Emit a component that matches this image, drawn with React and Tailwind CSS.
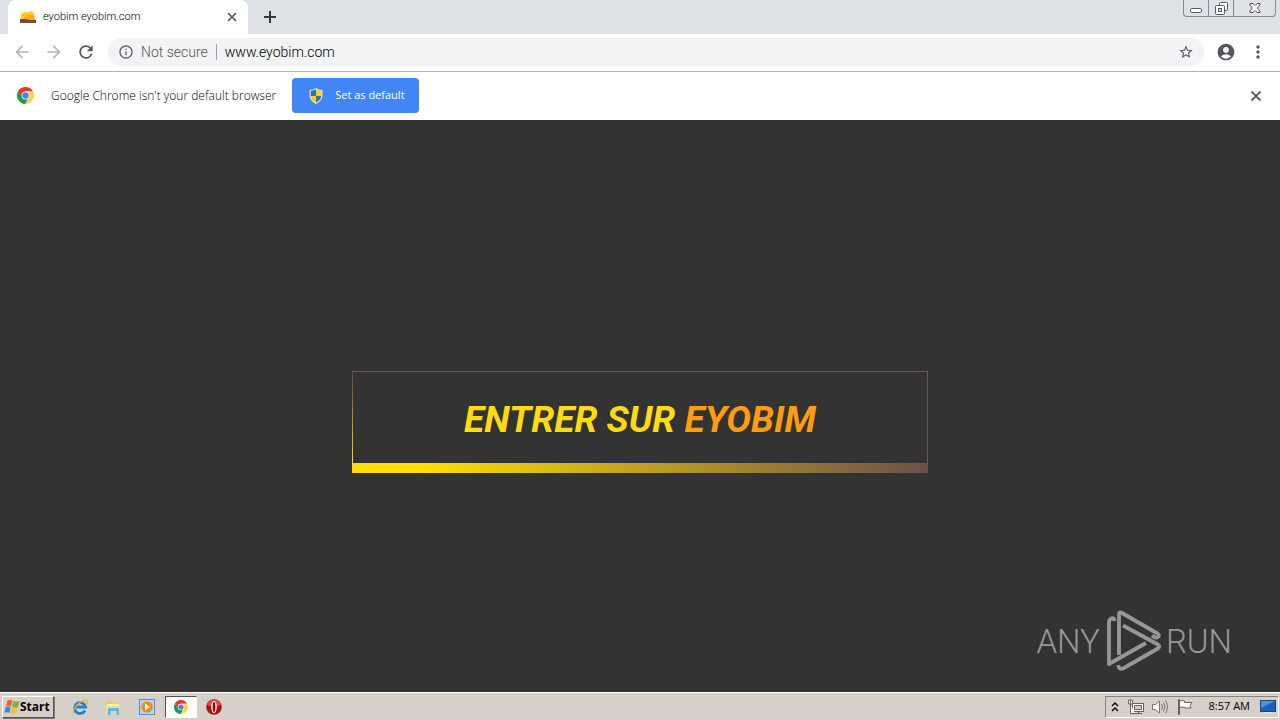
import { useState } from 'react'
import { MdArrowBack, MdArrowForward, MdRefresh, MdInfoOutline, MdStarBorder, MdAccountCircle, MdMoreVert } from 'react-icons/md'

function ChromeLogo({ className }) {
  return (
    <svg viewBox="0 0 48 48" className={className} aria-hidden="true">
      <path d="M24 13h21.2A24 24 0 0 0 3.2 12l10.6 18z" fill="#dd3b30" />
      <path d="M33.6 29.500 23 48A24 24 0 0 1 3.200 12l11.200 17.500z" fill="#169c50" />
      <path d="M24 13h21.200A24 24 0 0 1 23 48l10.600-18.500z" fill="#fdd250" />
      <circle cx="24" cy="24" r="11" fill="#fff" />
      <circle cx="24" cy="24" r="9" fill="#4a80e8" />
    </svg>
  )
}

function CloseIcon({ className }) {
  return (
    <svg viewBox="0 0 16 16" className={className} fill="none" stroke="currentColor" strokeWidth="2" aria-hidden="true">
      <path d="m3.500 3.500 9 9M12.500 3.500l-9 9" />
    </svg>
  )
}

function Favicon() {
  return (
    <svg viewBox="0 0 16 16" className="size-4 shrink-0" aria-hidden="true">
      <path d="M1 4.500 5 3l3 .5L11 2l3 1.500.5 7.500H1z" fill="#ffcf1c" />
      <path d="M6 6h8l1 5H3z" fill="#f7ae12" />
      <path d="M0 10h6l4 1h6v3H0z" fill="#6b5043" />
    </svg>
  )
}

function Shield() {
  return (
    <svg viewBox="0 0 16 16" className="size-4 shrink-0" aria-hidden="true">
      <path d="M8 0q3 2 6.500 2v5c0 4-2.500 7-6.500 9-4-2-6.500-5-6.500-9V2Q5 2 8 0z" fill="#e6dfb6" />
      <path d="M8 1.500V8H2.800V3z" fill="#2e6fc4" />
      <path d="M8 1.500V8h5.200V3z" fill="#fcd116" />
      <path d="M2.800 8H8v6.500C5 13 3 11 2.800 8z" fill="#fcd116" />
      <path d="M13.200 8H8v6.500c3-1.500 5-3.500 5.200-6.500z" fill="#2e6fc4" />
    </svg>
  )
}

function WindowControls() {
  const btn = 'flex h-full items-center justify-center border-r border-[#858a92]'
  return (
    <div className="mr-1 flex h-[17px] self-start overflow-hidden rounded-b border border-t-0 border-[#858a92]">
      <button className={`${btn} w-[25px]`} aria-label="Minimize">
        <svg viewBox="0 0 12 12" className="size-3">
          <rect x="0.500" y="6.500" width="11" height="4" rx="1" fill="#fff" stroke="#555a66" />
        </svg>
      </button>
      <button className={`${btn} w-[25px]`} aria-label="Restore">
        <svg viewBox="0 0 13 13" className="size-[13px]">
          <rect x="4.500" y="0.500" width="8" height="8" rx="1" fill="#fff" stroke="#555a66" />
          <rect x="0.500" y="3.500" width="9" height="9" rx="1" fill="#fff" stroke="#555a66" />
          <rect x="3.500" y="6.500" width="3" height="3" fill="#dee1e6" stroke="#555a66" />
        </svg>
      </button>
      <button className="flex h-full w-[41px] items-center justify-center" aria-label="Close window">
        <svg viewBox="0 0 12 12" className="size-3">
          <path d="M1 1.500h3l2 2 2-2h3v1.500L8.500 6 11 9v1.500H8l-2-2-2 2H1V9l2.500-3L1 3z" fill="#fff" stroke="#555a66" />
        </svg>
      </button>
    </div>
  )
}

function TabStrip() {
  return (
    <div className="flex h-[34px] bg-[#dee1e6] pl-2">
      <div className="flex w-60 items-center rounded-t-lg bg-white pl-3 pr-2">
        <Favicon />
        <span className="ml-[7px] flex-1 text-[11px] font-light text-black">eyobim eyobim.com</span>
        <button aria-label="Close tab" className="flex size-4 items-center justify-center text-[#5f6368]">
          <CloseIcon className="size-[14px]" />
        </button>
      </div>
      <button aria-label="New tab" className="ml-[14px] text-[#33363b]">
        <svg viewBox="0 0 16 16" className="size-4" fill="none" stroke="currentColor" strokeWidth="2" aria-hidden="true">
          <path d="M8 2v12M2 8h12" />
        </svg>
      </button>
      <div className="flex-1" />
      <WindowControls />
    </div>
  )
}

function Toolbar() {
  const [url, setUrl] = useState('www.eyobim.com')
  return (
    <div className="flex h-[38px] items-center border-b border-[#b2b5b8] bg-white pb-px pl-3">
      <button aria-label="Back" className="mr-3 text-[#b5b7ba]"><MdArrowBack className="size-5" /></button>
      <button aria-label="Forward" className="mr-3 text-[#b5b7ba]"><MdArrowForward className="size-5" /></button>
      <button aria-label="Reload" className="mr-3 text-[#54575b]"><MdRefresh className="size-5" /></button>
      <div className="flex h-7 flex-1 items-center rounded-full bg-[#f1f3f4] pl-[10px] pr-[10px]">
        <MdInfoOutline className="size-4 text-[#5f6368]" />
        <span className="ml-[7px] text-[14px] font-light text-[#54575b]">Not secure</span>
        <span className="ml-2 h-4 w-px bg-[#9aa0a6]" />
        <input
          aria-label="Address"
          value={url}
          onChange={(e) => setUrl(e.target.value)}
          className="ml-2 min-w-0 flex-1 bg-transparent text-[14px] font-light text-black outline-none"
        />
        <button aria-label="Bookmark this page" className="text-[#54575b]">
          <MdStarBorder className="size-4" />
        </button>
      </div>
      <button aria-label="Profile" className="ml-3 text-[#54575b]"><MdAccountCircle className="size-5" /></button>
      <button aria-label="Menu" className="ml-3 mr-3 text-[#54575b]"><MdMoreVert className="size-5" /></button>
    </div>
  )
}

function InfoBar({ onClose }) {
  return (
    <div className="flex h-12 items-center bg-white pb-px pl-[17px] pr-4 font-['Open_Sans',sans-serif]">
      <ChromeLogo className="size-[17px]" />
      <span className="ml-[17px] text-[12px] font-light text-black">Google Chrome isn't your default browser</span>
      <button className="ml-4 flex h-[35px] w-[127px] items-center rounded bg-[#4285f4] pl-4 text-[11px] text-white">
        <Shield />
        <span className="ml-[11px]">Set as default</span>
      </button>
      <button onClick={onClose} aria-label="Dismiss" className="ml-auto text-[#5f6368]">
        <CloseIcon className="size-4" />
      </button>
    </div>
  )
}

function AnyRunMark() {
  return (
    <div className="absolute bottom-5 right-12 flex items-center gap-1 text-[33px] leading-none text-[#979797]">
      <span className="font-light">ANY</span>
      <svg viewBox="0 0 56 62" className="ml-[2px] h-[62px] w-14" fill="none" stroke="currentColor" strokeWidth="3.800" strokeLinejoin="round" aria-hidden="true">
        <path d="M8.500 11Q8 7 5 8.500 3 10 3 13V54L40 33" />
        <path d="M13 45V4Q13 1.500 16 3L51.500 23.500Q54.500 26 51 27.500 49 28 46 25.500" />
        <path d="M17 15.500 51 34Q55.500 36.500 51 39L17 58.500Q12.500 60 12.500 55" />
      </svg>
      <span className="font-light">RUN</span>
    </div>
  )
}

function Page() {
  return (
    <main className="relative flex flex-1 items-center justify-center bg-[#333333]">
      <a
        href="#eyobim"
        className="mt-8 flex h-[102px] w-[45%] items-center justify-center pb-1 text-[37px] font-bold italic text-[#ffdb15] [background:linear-gradient(90deg,#ffde05_12%,#6d5149)_bottom/100%_10px_no-repeat,linear-gradient(0deg,#ffde05_10%,#6d5149_90%)_left/1px_100%_no-repeat,linear-gradient(#6d5752,#6d5752)_top/100%_1px_no-repeat,linear-gradient(#6d5752,#6d5752)_right/1px_100%_no-repeat]"
      >
        <span>ENTRER SUR <span className="text-[#ff9c12]">EYOBIM</span></span>
      </a>
      <AnyRunMark />
    </main>
  )
}

function WindowsFlag() {
  return (
    <svg viewBox="0 0 16 16" className="size-4" aria-hidden="true">
      <path d="M3.500 1.500q2.500-1.500 5 0L7 7.500q-2.500-1.500-5 0z" fill="#e8632b" />
      <path d="M9.200 2q3 1.500 6.300 0L14 8q-3 1.500-6 0z" fill="#7fb241" />
      <path d="M1.700 8.300q2.500-1.500 5 0L5.300 14q-2.500-1.500-5 0z" fill="#3f83cf" />
      <path d="M7.600 8.800q3 1.500 6 0L12 14.500q-3 1.500-6 0z" fill="#f8c02c" />
    </svg>
  )
}

function ExplorerIcon() {
  return (
    <svg viewBox="0 0 16 16" className="size-4" fill="none" aria-hidden="true">
      <path d="M13 11.500A5.500 5.500 0 1 1 13.500 8H4" stroke="#2383d2" strokeWidth="2.800" />
      <path d="M2 14.500C-1 11 10-1 15 1.500q1 1-1 3.500" stroke="#e8b62c" strokeWidth="1.300" />
    </svg>
  )
}

function FolderIcon() {
  return (
    <svg viewBox="0 0 16 16" className="size-4" aria-hidden="true">
      <path d="M1 2h5l1 1.500h7V13H1z" fill="#eecb62" />
      <path d="M2 5h12v3H2z" fill="#fff4b8" />
      <path d="M1 7h14v6H1z" fill="#f5dc82" />
      <path d="M3 16v-6q0-1 1-1h9q1 0 1 1v6h-2.500v-4h-6v4z" fill="#62b5dc" />
    </svg>
  )
}

function PlayerIcon() {
  return (
    <svg viewBox="0 0 16 16" className="size-4" aria-hidden="true">
      <rect x="0.500" y="0.500" width="15" height="15" fill="#b5d5f0" stroke="#568fc7" />
      <circle cx="8" cy="8" r="5.800" fill="#f28a1c" />
      <path d="m6 4.500 5 3.500-5 3.500z" fill="#fff" />
    </svg>
  )
}

function OperaIcon() {
  return (
    <svg viewBox="0 0 16 16" className="size-4" aria-hidden="true">
      <circle cx="8" cy="8" r="7.800" fill="#a81219" />
      <path d="M1 6a7.300 7.300 0 0 1 14 0q-7 3-14 0z" fill="#d9484a" />
      <ellipse cx="8" cy="8" rx="2.800" ry="6" fill="#fff" />
      <ellipse cx="8" cy="8" rx="1.400" ry="5" fill="#8d0c12" />
    </svg>
  )
}

function Tray() {
  return (
    <div className="flex h-[22px] items-center border border-[#87837c] border-b-white border-r-white pl-[5px] pr-[2px]">
      <svg viewBox="0 0 8 10" className="h-[10px] w-2" fill="none" stroke="#111" strokeWidth="1.500" aria-hidden="true">
        <path d="m1 4 3-3 3 3M1 9l3-3 3 3" />
      </svg>
      <svg viewBox="0 0 16 16" className="ml-[9px] size-4" fill="#fff" stroke="#66635e" aria-hidden="true">
        <rect x="4.500" y="4.500" width="11" height="8" />
        <path d="M6.500 6.500h7v4h-7z" fill="#d6d0c8" />
        <path d="M7 14.500h7M10.500 12v2" />
        <path d="M.5 1v4h4V1zM2.500 1v4M2.500 5v9.500H7" />
      </svg>
      <svg viewBox="0 0 17 16" className="ml-2 h-4 w-[17px]" fill="none" stroke="#77736d" aria-hidden="true">
        <path d="M.5 5.500h3L7.500 2v12l-4-3.500h-3z" fill="#fff" />
        <path d="M9.500 5q2 3 0 6M11.500 3.500q3 4.500 0 9M13.500 1.500q4 6.500 0 13" />
      </svg>
      <svg viewBox="0 0 16 16" className="ml-2 size-4" fill="#fff" stroke="#66635e" aria-hidden="true">
        <path d="M1.500.5v15h1V.5zM2.500 2q3-1 5 0v1.500h7.500l-2 3 1 2.500H8V8.500q-3-1-5.500 0z" />
      </svg>
      <time className="ml-4 text-[11px] text-black">8:57 AM</time>
      <svg viewBox="0 0 16 14" className="ml-[10px] h-[14px] w-4" aria-hidden="true">
        <rect x="0.500" y="0.500" width="15" height="11" fill="#1b61be" stroke="#24426f" />
        <path d="M1 1h14L1 8z" fill="#4e91df" />
        <path d="M4 12h8v1.500H4z" fill="#e3e6eb" />
      </svg>
    </div>
  )
}

function Taskbar() {
  return (
    <footer className="flex h-7 items-center border-t border-white bg-[#d6d0c8] pl-[2px] pr-px font-['Open_Sans',sans-serif]">
      <button className="flex h-[22px] w-[52px] items-center border border-white border-b-[#55524d] border-r-[#55524d] pl-px text-[12px] font-bold text-black shadow-[1px_1px_0_#807c75]">
        <WindowsFlag />
        <span>Start</span>
      </button>
      <nav className="ml-[18px] flex items-center" aria-label="Quick launch">
        <button aria-label="Internet Explorer"><ExplorerIcon /></button>
        <button aria-label="Windows Explorer" className="ml-[17px]"><FolderIcon /></button>
        <button aria-label="Media Player" className="ml-[18px]"><PlayerIcon /></button>
        <button aria-label="Google Chrome" className="ml-[10px] flex h-[22px] w-8 items-center justify-center border border-[#55524d] border-b-white border-r-white bg-white">
          <ChromeLogo className="size-[14px]" />
        </button>
        <button aria-label="Opera" className="ml-[9px]"><OperaIcon /></button>
      </nav>
      <div className="flex-1" />
      <Tray />
    </footer>
  )
}

export default function App() {
  const [showInfo, setShowInfo] = useState(true)

  return (
    <div className="flex min-h-screen flex-col font-['Roboto',sans-serif]">
      <TabStrip />
      <Toolbar />
      {showInfo && <InfoBar onClose={() => setShowInfo(false)} />}
      <Page />
      <Taskbar />
    </div>
  )
}
